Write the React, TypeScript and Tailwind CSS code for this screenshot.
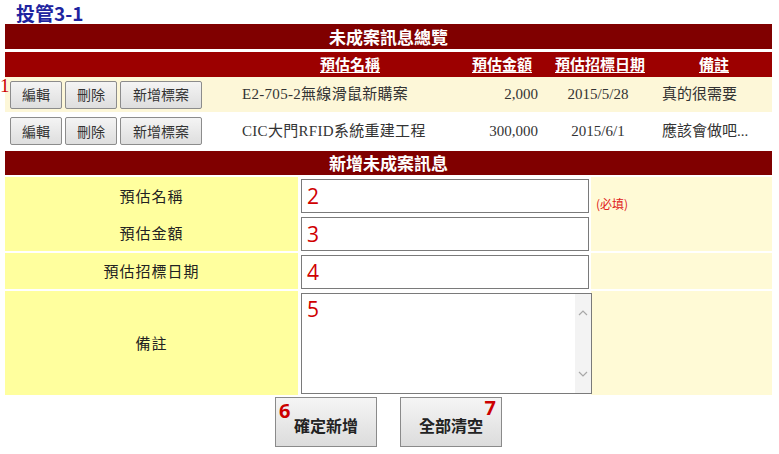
import React from "react";

const sans = { fontFamily: '"Noto Sans CJK TC", "Noto Sans", sans-serif' };
const serif = { fontFamily: '"Liberation Serif", "Noto Sans CJK TC", serif' };

function RowBtn({ label, w }: { label: string; w: string }) {
  return (
    <div
      className={`${w} h-[28px] flex items-center justify-center border border-[#8c8c8c] bg-gradient-to-b from-[#f4f4f4] to-[#dedede] text-[14px] text-[#333] rounded-[2px]`}
      style={sans}
    >
      {label}
    </div>
  );
}

function DataRow({
  bg,
  name,
  amount,
  date,
  note,
  mark,
}: {
  bg: string;
  name: string;
  amount: string;
  date: string;
  note: string;
  mark?: boolean;
}) {
  return (
    <div className={`relative grid grid-cols-[227px_228px_84px_108px_120px] items-center ${bg}`}>
      <div className="flex gap-[3px] pl-[5px]">
        <RowBtn label="編輯" w="w-[52px]" />
        <RowBtn label="刪除" w="w-[52px]" />
        <RowBtn label="新增標案" w="w-[82px]" />
      </div>
      <div className="pl-[10px] text-[15px] text-[#333] whitespace-nowrap tracking-[0.3px]" style={serif}>
        {name}
      </div>
      <div className="pr-[6px] text-right text-[15px] text-[#333]" style={serif}>
        {amount}
      </div>
      <div className="text-center text-[15px] text-[#333]" style={serif}>
        {date}
      </div>
      <div className="pl-[10px] text-[15px] text-[#333] whitespace-nowrap" style={serif}>
        {note}
      </div>
      {mark && (
        <span
          className="absolute left-[-5px] top-[-1px] text-[19px] leading-none text-[#cc0000]"
          style={serif}
        >
          1
        </span>
      )}
    </div>
  );
}

function Num({ n }: { n: string }) {
  return (
    <span className="text-[21px] leading-none text-[#d00000]" style={{ fontFamily: '"Open Sans", sans-serif' }}>
      {n}
    </span>
  );
}

function FormRow({
  label,
  n,
  tall,
  required,
}: {
  label: string;
  n: string;
  tall?: boolean;
  required?: boolean;
}) {
  return (
    <div className={`grid grid-cols-[293px_293px_181px] ${tall ? "h-[104px]" : "h-[36px]"}`}>
      <div className="bg-[#ffff9e] flex items-center justify-center text-[15px] tracking-[1px] text-[#222]" style={sans}>
        {label}
      </div>
      <div className="bg-white pl-[3px] pt-[2px]">
        {tall ? (
          <div className="relative w-[291px] h-[101px] border border-[#7a7a7a] bg-white">
            <div className="pl-[5px] pt-[5px]">
              <Num n={n} />
            </div>
            <div className="absolute right-0 top-0 h-full w-[16px] bg-[#f3f3f3] flex flex-col items-center justify-between py-[16px]">
              <svg width="10" height="6" viewBox="0 0 10 6">
                <path d="M1 5 L5 1 L9 5" fill="none" stroke="#a8a8a8" strokeWidth="1.2" />
              </svg>
              <svg width="10" height="6" viewBox="0 0 10 6">
                <path d="M1 1 L5 5 L9 1" fill="none" stroke="#a8a8a8" strokeWidth="1.2" />
              </svg>
            </div>
          </div>
        ) : (
          <div className="w-[288px] h-[34px] border border-[#7a7a7a] bg-white flex items-center pl-[5px]">
            <Num n={n} />
          </div>
        )}
      </div>
      <div className="bg-[#fffad6] pl-[5px] pt-[14px]">
        {required && (
          <span className="text-[12px] text-[#e02020]" style={sans}>
            (必填)
          </span>
        )}
      </div>
    </div>
  );
}

function BigBtn({ label, n, right }: { label: string; n: string; right?: boolean }) {
  return (
    <div
      className="relative w-[102px] h-[50px] border border-[#8a8a8a] bg-gradient-to-b from-[#f5f5f5] to-[#dcdcdc] flex items-center justify-center pt-[6px] text-[16px] font-bold text-[#222]"
      style={sans}
    >
      {label}
      <span
        className={`absolute ${right ? "right-[5px] top-[0px]" : "left-[3px] top-[3px]"} text-[20px] font-bold leading-[20px] text-[#cc0000]`}
        style={{ fontFamily: '"Open Sans", sans-serif' }}
      >
        {n}
      </span>
    </div>
  );
}

export default function App() {
  return (
    <div className="w-[779px] h-[454px] bg-white overflow-hidden">
      <div className="h-[24px] pl-[16px] text-[19px] font-bold leading-[26px] text-[#1e24a0]" style={sans}>
        投管3-1
      </div>
      <div className="ml-[5px] w-[767px] flex flex-col">
        <div className="h-[25px] bg-[#800000] flex items-center justify-center text-[17px] font-bold text-white" style={sans}>
          未成案訊息總覽
        </div>
        <div className="mt-[3px] h-[25px] bg-[#9c0000] grid grid-cols-[227px_228px_84px_108px_120px] items-center text-[15px] font-bold text-white" style={sans}>
          <div />
          <div className="text-center underline underline-offset-[2px] pl-[8px]">預估名稱</div>
          <div className="text-center underline underline-offset-[2px]">預估金額</div>
          <div className="text-center underline underline-offset-[2px] pl-[4px]">預估招標日期</div>
          <div className="text-center underline underline-offset-[2px] pl-[4px]">備註</div>
        </div>
        <div className="h-[35px] flex flex-col">
          <DataRow bg="bg-[#fdf7d8] h-[35px]" name="E2-705-2無線滑鼠新購案" amount="2,000" date="2015/5/28" note="真的很需要" mark />
        </div>
        <div className="h-[38px] flex flex-col">
          <DataRow bg="bg-white h-[38px]" name="CIC大門RFID系統重建工程" amount="300,000" date="2015/6/1" note="應該會做吧..." />
        </div>
        <div className="mt-[1px] h-[24px] bg-[#800000] flex items-center justify-center text-[17px] font-bold text-white" style={sans}>
          新增未成案訊息
        </div>
        <div className="mt-[2px] flex flex-col gap-[2px]">
          <FormRow label="預估名稱" n="2" required />
          <FormRow label="預估金額" n="3" />
          <FormRow label="預估招標日期" n="4" />
          <FormRow label="備註" n="5" tall />
        </div>
      </div>
      <div className="mt-[2px] flex justify-center gap-[23px] pr-[2px]">
        <BigBtn label="確定新增" n="6" />
        <BigBtn label="全部清空" n="7" right />
      </div>
    </div>
  );
}
